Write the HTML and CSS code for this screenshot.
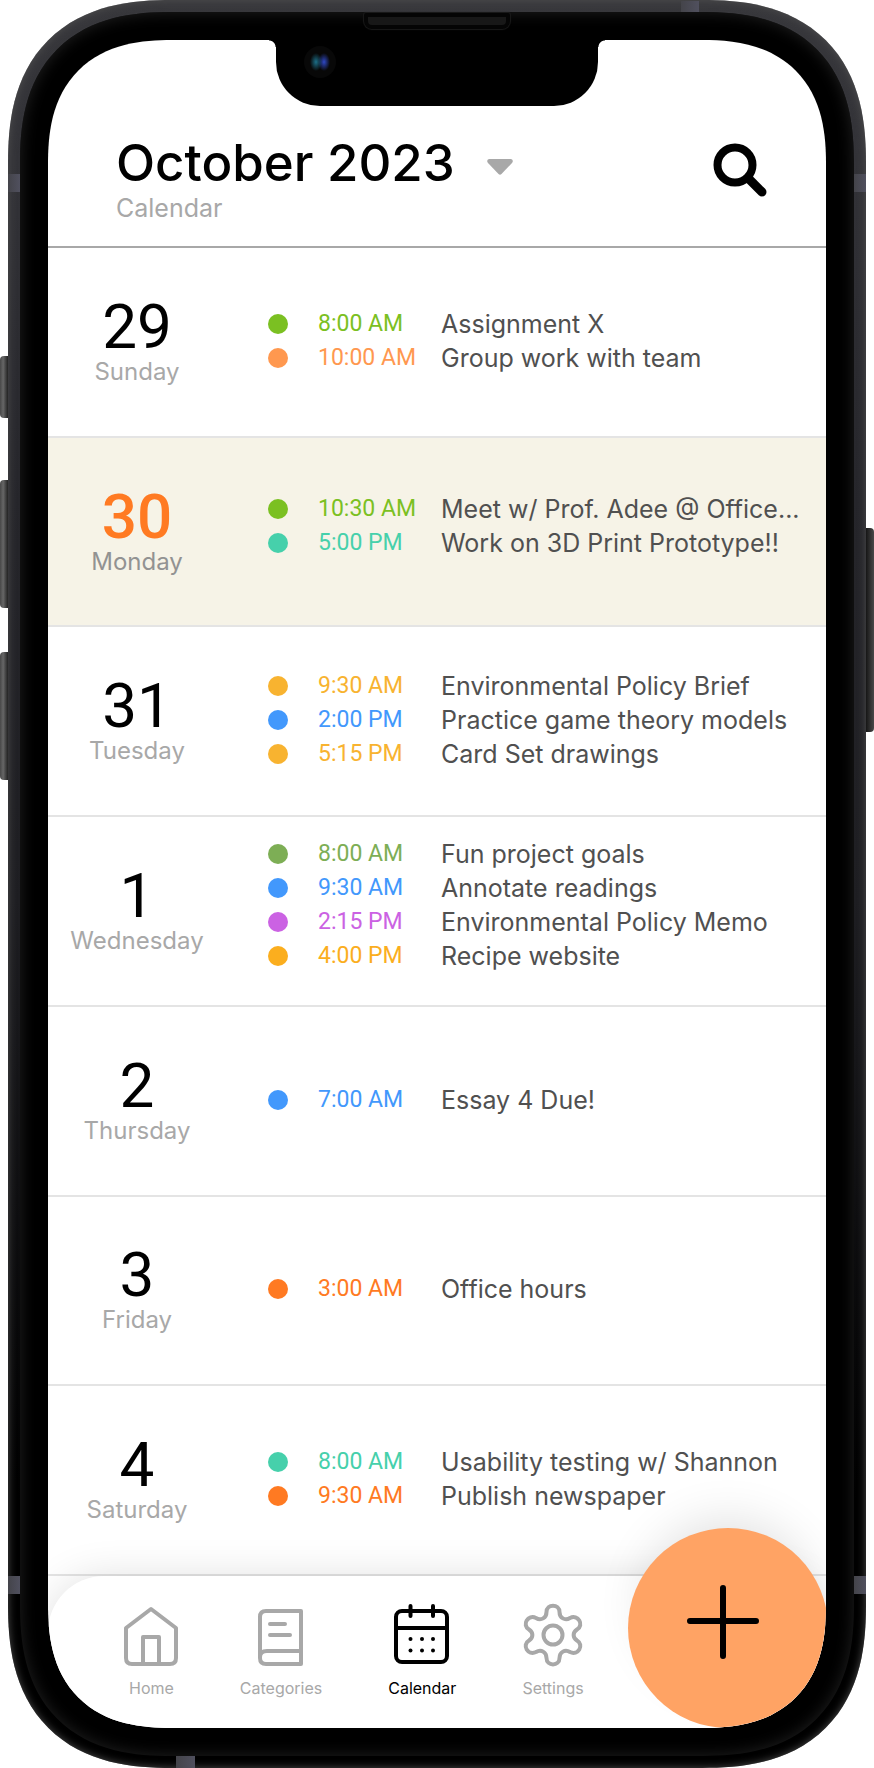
FILE: index.html
```html
<!DOCTYPE html>
<html lang="en">
<head>
<meta charset="utf-8">
<meta name="viewport" content="width=device-width, initial-scale=1">
<title>Calendar</title>
<link rel="stylesheet" href="styles.css">
</head>
<body>
<div class="device">
  <span class="side-key side-key-mute"></span>
  <span class="side-key side-key-up"></span>
  <span class="side-key side-key-down"></span>
  <span class="side-key side-key-power"></span>
  <div class="frame">
    <span class="band band-left-top"></span>
    <span class="band band-right-top"></span>
    <span class="band band-left-bottom"></span>
    <span class="band band-right-bottom"></span>
    <span class="band band-top"></span>
    <span class="band band-bottom"></span>
    <div class="bezel">
      <span class="speaker"></span>
      <div class="screen">
        <div class="notch"><span class="camera"></span></div>
        <header class="header">
          <div>
            <div class="title-row">
              <h1 class="title">October 2023</h1>
              <button class="icon-button caret" type="button" aria-label="Choose month">
                <svg width="26" height="16" viewBox="0 0 26 16"><path d="M2 0H24Q27 1 25 4L14.500 15Q13 16.500 11.500 15L1 4Q-1 1 2 0Z" fill="#a8a8a8"/></svg>
              </button>
            </div>
            <p class="subtitle">Calendar</p>
          </div>
          <button class="icon-button" type="button" aria-label="Search">
            <svg width="54" height="54" viewBox="0 0 54 54" fill="none" stroke="#000" stroke-linecap="round"><circle cx="22" cy="22" r="17.500" stroke-width="8"/><path d="M35.500 35.500L49 49" stroke-width="9"/></svg>
          </button>
        </header>
        <main class="days">
          <section class="day">
            <h2 class="date"><span class="number">29</span><span class="weekday">Sunday</span></h2>
            <ul class="events">
              <li class="event lime"><time>8:00 AM</time><span class="name">Assignment X</span></li>
              <li class="event peach"><time>10:00 AM</time><span class="name">Group work with team</span></li>
            </ul>
          </section>
          <section class="day today">
            <h2 class="date"><span class="number">30</span><span class="weekday">Monday</span></h2>
            <ul class="events raised">
              <li class="event lime"><time>10:30 AM</time><span class="name">Meet w/ Prof. Adee @ Office...</span></li>
              <li class="event teal"><time>5:00 PM</time><span class="name">Work on 3D Print Prototype!!</span></li>
            </ul>
          </section>
          <section class="day">
            <h2 class="date"><span class="number">31</span><span class="weekday">Tuesday</span></h2>
            <ul class="events">
              <li class="event yellow"><time>9:30 AM</time><span class="name">Environmental Policy Brief</span></li>
              <li class="event blue"><time>2:00 PM</time><span class="name">Practice game theory models</span></li>
              <li class="event yellow"><time>5:15 PM</time><span class="name">Card Set drawings</span></li>
            </ul>
          </section>
          <section class="day">
            <h2 class="date"><span class="number">1</span><span class="weekday">Wednesday</span></h2>
            <ul class="events raised">
              <li class="event sage"><time>8:00 AM</time><span class="name">Fun project goals</span></li>
              <li class="event blue"><time>9:30 AM</time><span class="name">Annotate readings</span></li>
              <li class="event purple"><time>2:15 PM</time><span class="name">Environmental Policy Memo</span></li>
              <li class="event amber"><time>4:00 PM</time><span class="name">Recipe website</span></li>
            </ul>
          </section>
          <section class="day">
            <h2 class="date"><span class="number">2</span><span class="weekday">Thursday</span></h2>
            <ul class="events">
              <li class="event blue"><time>7:00 AM</time><span class="name">Essay 4 Due!</span></li>
            </ul>
          </section>
          <section class="day">
            <h2 class="date"><span class="number">3</span><span class="weekday">Friday</span></h2>
            <ul class="events">
              <li class="event orange"><time>3:00 AM</time><span class="name">Office hours</span></li>
            </ul>
          </section>
          <section class="day">
            <h2 class="date"><span class="number">4</span><span class="weekday">Saturday</span></h2>
            <ul class="events">
              <li class="event teal"><time>8:00 AM</time><span class="name">Usability testing w/ Shannon</span></li>
              <li class="event orange"><time>9:30 AM</time><span class="name">Publish newspaper</span></li>
            </ul>
          </section>
        </main>
        <nav class="tabs" aria-label="Main">
          <a class="tab" href="#home">
            <svg width="64" height="64" viewBox="0 0 64 64"><path d="M32 6L57 25V55Q57 61 51 61H13Q7 61 7 55V25ZM24 61V34H40V61"/></svg>
            <span>Home</span>
          </a>
          <a class="tab" href="#categories">
            <svg width="64" height="64" viewBox="0 0 64 64"><path d="M52 8H17Q11 8 11 14V55Q11 61 17 61H52ZM52 48H18Q11 48 11 54M21 21H36M21 32H41"/></svg>
            <span>Categories</span>
          </a>
          <a class="tab active" href="#calendar" aria-current="page">
            <svg width="64" height="64" viewBox="0 0 64 64"><rect x="6" y="8" width="51" height="51" rx="6"/><path d="M6 25H57M20.500 3V13M43 3V13"/><g class="days-dots"><circle cx="20.500" cy="36" r="2"/><circle cx="32" cy="36" r="2"/><circle cx="43" cy="36" r="2"/><circle cx="20.500" cy="47.500" r="2"/><circle cx="32" cy="47.500" r="2"/><circle cx="43" cy="47.500" r="2"/></g></svg>
            <span>Calendar</span>
          </a>
          <a class="tab" href="#settings">
            <svg width="64" height="64" viewBox="0 0 64 64"><circle cx="32" cy="32" r="9.500"/><path d="M25.500 9C25.500 0.500 38.500 0.500 38.500 9C38.500 15 44 18 49 15C57 11 63.500 22 56 26.500C51.500 29.500 51.500 34.500 56 37.500C63.500 42 57 53 49 49C44 46 38.500 49 38.500 55C38.500 63.500 25.500 63.500 25.500 55C25.500 49 20 46 15 49C7 53 0.500 42 8 37.500C12.500 34.500 12.500 29.500 8 26.500C0.500 22 7 11 15 15C20 18 25.500 15 25.500 9Z"/></svg>
            <span>Settings</span>
          </a>
        </nav>
        <button class="add" type="button" aria-label="Add event">
          <svg width="84" height="80" viewBox="0 0 84 80" fill="none" stroke="#000" stroke-width="6" stroke-linecap="round"><path d="M37 6V74M4 39H70"/></svg>
        </button>
      </div>
    </div>
  </div>
</div>
</body>
</html>
```
FILE: styles.css
```css
* { box-sizing: border-box; }

body {
  margin: 0;
  background: #fff;
  font-family: Inter, "Liberation Sans", sans-serif;
}

h1, h2, p, ul { margin: 0; padding: 0; font-weight: 400; }
svg { display: block; }

/* Device */
.device {
  position: relative;
  display: flex;
  min-height: 100vh;
  padding: 0 8px;
}

.frame {
  position: relative;
  flex: 1;
  display: flex;
  min-width: 0;
  padding: 12px;
  border-radius: 140px;
  background: linear-gradient(#38383c 0, #333338 160px, #26262b 500px, #1e1e22 900px, #000 1500px);
  box-shadow: inset 0 0 8px #505050;
}

.bezel {
  position: relative;
  flex: 1;
  display: flex;
  min-width: 0;
  padding: 28px;
  border-radius: 128px;
  background: #000;
  box-shadow: inset 0 0 16px #222;
}

.screen {
  position: relative;
  flex: 1;
  display: flex;
  flex-direction: column;
  min-width: 0;
  overflow: hidden;
  border-radius: 100px;
  background: #fff;
}

@supports (corner-shape: superellipse(1.3)) {
  .frame, .bezel, .screen { corner-shape: superellipse(1.3); }
  .frame { border-radius: 164px; }
  .bezel { border-radius: 152px; }
  .screen { border-radius: 124px; }
}

.side-key {
  position: absolute;
  left: 0;
  width: 8px;
  border-radius: 4px 0 0 4px;
  background: linear-gradient(90deg, #484848, #666 40%, #222);
}
.side-key-mute { top: 356px; height: 62px; }
.side-key-up { top: 480px; height: 128px; }
.side-key-down { top: 652px; height: 128px; }
.side-key-power {
  top: 528px;
  right: 0;
  left: auto;
  height: 204px;
  border-radius: 0 4px 4px 0;
  background: linear-gradient(90deg, #161616, #484848);
}

.band {
  position: absolute;
  width: 12px;
  height: 18px;
  background: linear-gradient(90deg, #44444a, #50505e);
}
.band-left-top { top: 174px; left: 0; }
.band-right-top { top: 174px; right: 0; }
.band-left-bottom { bottom: 174px; left: 0; }
.band-right-bottom { bottom: 174px; right: 0; }
.band-top { top: 1px; right: 167px; width: 18px; height: 11px; }
.band-bottom { bottom: 0; left: 168px; width: 19px; height: 12px; }

.speaker {
  position: absolute;
  top: 1px;
  left: 50%;
  width: 146px;
  height: 16px;
  margin-left: -73px;
  border: 4px solid #050505;
  border-radius: 2px 2px 8px 8px;
  background: #181818;
  box-shadow: 0 0 1px 1px #1a1a1a;
}

.notch {
  position: relative;
  align-self: center;
  width: 322px;
  height: 66px;
  border-radius: 0 0 44px 44px;
  background: #000;
}
.notch::before,
.notch::after {
  content: "";
  position: absolute;
  top: 0;
  width: 7px;
  height: 7px;
}
.notch::before { right: 100%; background: radial-gradient(circle at 0 100%, transparent 6px, #000 7px); }
.notch::after { left: 100%; background: radial-gradient(circle at 100% 100%, transparent 6px, #000 7px); }

.camera {
  position: absolute;
  top: 6px;
  left: 28px;
  width: 32px;
  height: 32px;
  border-radius: 50%;
  background:
    radial-gradient(ellipse 6px 9px at 12px 16px, #1c6f88, transparent),
    radial-gradient(ellipse 6px 9px at 20px 16px, #2f48c4, transparent),
    #080808;
}

/* Header */
.header {
  display: flex;
  justify-content: space-between;
  align-items: flex-start;
  height: 142px;
  padding: 24px 59px 0 68px;
  border-bottom: 2px solid #a8a8a8;
}

.title-row { display: flex; align-items: center; gap: 32px; }
.title { font-size: 51px; font-weight: 500; line-height: 66px; white-space: nowrap; }
.subtitle { color: #a8a8a8; font-size: 25px; line-height: 24px; }

.icon-button {
  padding: 0;
  border: 0;
  background: none;
  cursor: pointer;
}
.caret { margin-top: 8px; }
.header > .icon-button { margin-top: 13px; }

/* Days */
.days { flex: 1; display: flex; flex-direction: column; }

.day {
  flex: 1;
  display: grid;
  grid-template-columns: 178px 1fr;
  column-gap: 42px;
  align-items: center;
  border-bottom: 2px solid #e4e4e4;
}
.today { background: #f6f3e7; }

.date { display: flex; flex-direction: column; align-items: center; padding-top: 4px; }
.number { font-family: Roboto, sans-serif; font-size: 62px; line-height: 56px; }
.weekday { color: #a8a8a8; font-size: 24px; line-height: 34px; }
.today .number { color: #ff7a22; font-weight: 500; }
.today .weekday { color: #929292; }

.events { padding-bottom: 2px; list-style: none; }
.raised { padding-bottom: 12px; }

.event {
  display: grid;
  grid-template-columns: 20px 93px 1fr;
  column-gap: 30px;
  align-items: center;
  font-size: 25px;
  line-height: 34px;
  white-space: nowrap;
}
.event::before {
  content: "";
  width: 20px;
  height: 20px;
  border-radius: 50%;
  background: currentColor;
}
.event time { font-family: Roboto, sans-serif; font-size: 23px; }
.name { color: #505050; }

.lime { color: #7bc022; }
.peach { color: #ff984f; }
.teal { color: #46d0ab; }
.yellow { color: #f8b330; }
.blue { color: #4298fc; }
.sage { color: #7dae55; }
.purple { color: #cb62e3; }
.amber { color: #fbae1e; }
.orange { color: #ff7a22; }

/* Tab bar */
.tabs {
  position: relative;
  display: flex;
  align-items: flex-start;
  gap: 66px;
  height: 152px;
  padding: 27px 0 0 81px;
  border-radius: 56px 56px 0 0;
  background: #fff;
  box-shadow: 0 0 40px rgba(0, 0, 0, 0.12);
}

.tab {
  display: flex;
  flex-direction: column;
  align-items: center;
  gap: 11px;
  color: #a8a8a8;
  font-size: 16px;
  line-height: 20px;
  text-decoration: none;
}
.tab svg {
  margin: 0 -10px;
  fill: none;
  stroke: currentColor;
  stroke-width: 4;
  stroke-linecap: round;
  stroke-linejoin: round;
}
.tab .days-dots { fill: currentColor; stroke: none; }
.active { color: #000; }

.add {
  position: absolute;
  right: -2px;
  bottom: 0;
  display: flex;
  align-items: center;
  justify-content: center;
  width: 200px;
  height: 200px;
  padding: 0 0 12px;
  border: 0;
  border-radius: 50%;
  background: #ffa364;
  box-shadow: 0 -24px 48px -16px rgba(0, 0, 0, 0.12);
  cursor: pointer;
}
```
